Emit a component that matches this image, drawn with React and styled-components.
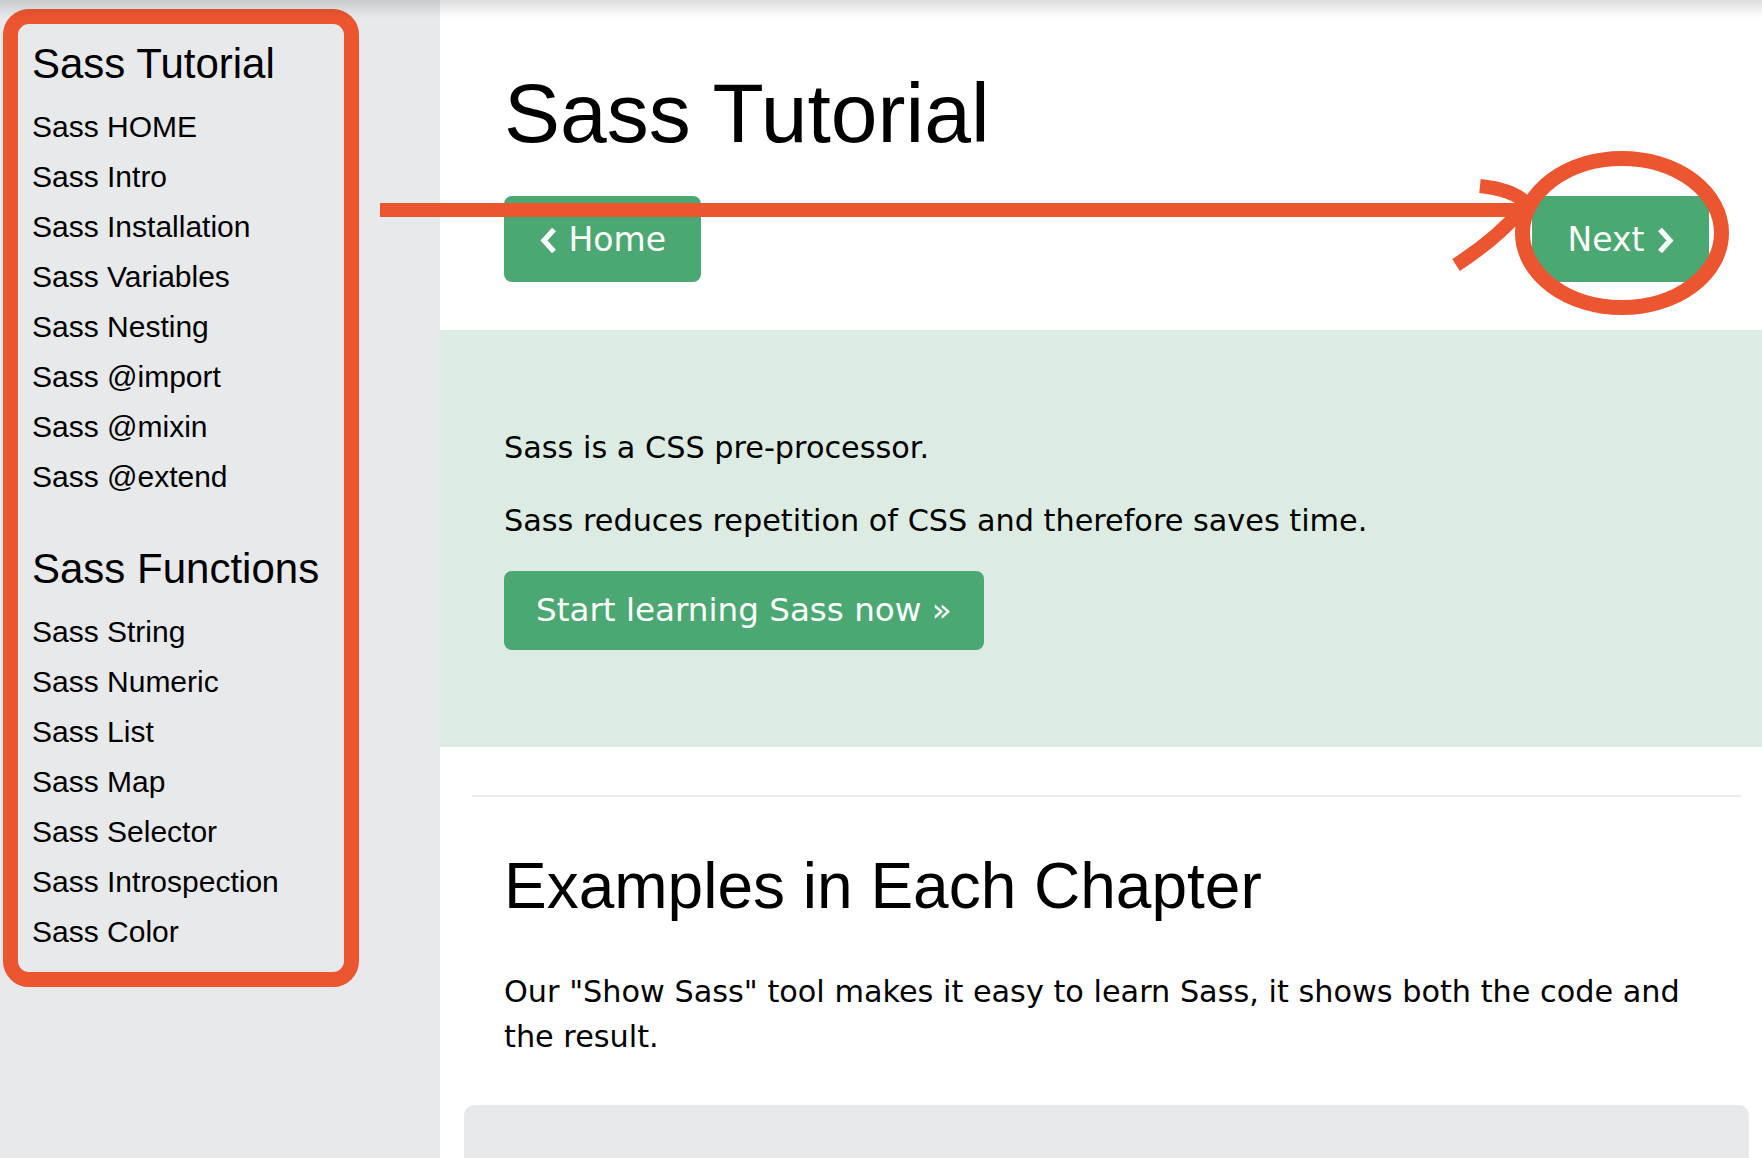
import React from 'react';
import styled, { createGlobalStyle } from 'styled-components';

const GlobalStyle = createGlobalStyle`
  * { box-sizing: border-box; }
  html, body { margin: 0; padding: 0; background: #ffffff; }
  body {
    font-family: "DejaVu Sans", Verdana, sans-serif;
    color: #000;
    overflow: hidden;
  }
`;

const ACCENT = '#eb5530';
const GREEN = '#4ca873';

const Page = styled.div`
  position: relative;
  display: flex;
  width: 1762px;
  height: 1158px;
  overflow: hidden;

  &::before {
    content: "";
    position: absolute;
    top: 0;
    left: 0;
    right: 0;
    height: 18px;
    background: linear-gradient(rgba(0, 0, 0, 0.13), rgba(0, 0, 0, 0));
    pointer-events: none;
    z-index: 2;
  }
`;

const Sidebar = styled.aside`
  flex: 0 0 440px;
  background: #e7e9eb;
  padding: 9px 0 0 3px;
`;

const NavBox = styled.nav`
  width: 356px;
  border: 15px solid ${ACCENT};
  border-radius: 26px;
  padding: 15px 0 15px 14px;
  font-family: "Liberation Sans", Arial, sans-serif;
`;

const NavHeading = styled.h2`
  margin: ${(p) => (p.$spaced ? '42px' : '0')} 0 14px;
  font-size: 42px;
  line-height: 49px;
  font-weight: 400;
  color: #000;
  white-space: nowrap;
`;

const NavLink = styled.a`
  display: block;
  font-size: 30px;
  line-height: 50px;
  color: #000;
  text-decoration: none;
  white-space: nowrap;
`;

const Main = styled.main`
  flex: 1;
  background: #fff;
  display: flex;
  flex-direction: column;
`;

const Intro = styled.header`
  padding: 63px 53px 48px 64px;
`;

const Title = styled.h1`
  margin: 0 0 32px;
  font-family: "Liberation Sans", Arial, sans-serif;
  font-size: 84px;
  line-height: 101px;
  font-weight: 400;
`;

const ButtonRow = styled.div`
  display: flex;
  justify-content: space-between;
  align-items: center;
`;

const Button = styled.a`
  display: inline-flex;
  align-items: center;
  gap: 12px;
  background: ${GREEN};
  color: #fff;
  font-family: "DejaVu Sans", Verdana, sans-serif;
  font-size: ${(p) => (p.$big ? '32.6px' : '33px')};
  line-height: 49.5px;
  padding: ${(p) => (p.$big ? '15px 32px 15px 32px' : '19px 35.5px 17px')};
  border-radius: 8px;
  text-decoration: none;
  white-space: nowrap;
`;

const ChevronIcon = styled.svg`
  width: 17px;
  height: 25px;
  flex: 0 0 auto;
  margin-top: 2px;
`;

const Chevron = ({ dir }) => (
  <ChevronIcon viewBox="0 0 17 25" aria-hidden="true">
    <path
      d={dir === 'left' ? 'M14 1.5 L4 12.5 L14 23.5' : 'M3 1.5 L13 12.5 L3 23.5'}
      fill="none"
      stroke="#fff"
      strokeWidth="5.2"
      strokeLinejoin="miter"
    />
  </ChevronIcon>
);

const Band = styled.section`
  background: #ddece2;
  padding: 95px 53px 97px 64px;
`;

const Para = styled.p`
  margin: 0 0 ${(p) => (p.$last ? '0' : '28px')};
  font-size: 30.3px;
  line-height: 45px;
`;

const Lower = styled.section`
  padding: 48px 13px 0 24px;
  display: flex;
  flex-direction: column;
`;

const Rule = styled.hr`
  margin: 0 8px;
  border: none;
  height: 2px;
  background: #ebeced;
`;

const Text = styled.div`
  padding: 0 40px;
`;

const SectionTitle = styled.h2`
  margin: 50.6px 0 44px;
  font-family: "Liberation Sans", Arial, sans-serif;
  font-size: 64px;
  line-height: 77px;
  font-weight: 400;
`;

const ExampleBox = styled.div`
  margin-top: 46.6px;
  height: 220px;
  background: #e7e9eb;
  border-radius: 10px;
`;

const Overlay = styled.svg`
  position: absolute;
  top: 0;
  left: 0;
  width: 1762px;
  height: 1158px;
  pointer-events: none;
  z-index: 3;
`;

const tutorialLinks = [
  'Sass HOME',
  'Sass Intro',
  'Sass Installation',
  'Sass Variables',
  'Sass Nesting',
  'Sass @import',
  'Sass @mixin',
  'Sass @extend',
];

const functionLinks = [
  'Sass String',
  'Sass Numeric',
  'Sass List',
  'Sass Map',
  'Sass Selector',
  'Sass Introspection',
  'Sass Color',
];

export default function App() {
  return (
    <>
      <GlobalStyle />
      <Page>
        <Sidebar>
          <NavBox>
            <NavHeading>Sass Tutorial</NavHeading>
            {tutorialLinks.map((l) => (
              <NavLink key={l} href="#">{l}</NavLink>
            ))}
            <NavHeading $spaced>Sass Functions</NavHeading>
            {functionLinks.map((l) => (
              <NavLink key={l} href="#">{l}</NavLink>
            ))}
          </NavBox>
        </Sidebar>

        <Main>
          <Intro>
            <Title>Sass Tutorial</Title>
            <ButtonRow>
              <Button href="#"><Chevron dir="left" />Home</Button>
              <Button href="#">Next<Chevron dir="right" /></Button>
            </ButtonRow>
          </Intro>

          <Band>
            <Para>Sass is a CSS pre-processor.</Para>
            <Para>Sass reduces repetition of CSS and therefore saves time.</Para>
            <Button $big href="#">Start learning Sass now »</Button>
          </Band>

          <Lower>
            <Rule />
            <Text>
              <SectionTitle>Examples in Each Chapter</SectionTitle>
              <Para $last>
                Our "Show Sass" tool makes it easy to learn Sass, it shows both the code and the result.
              </Para>
            </Text>
            <ExampleBox />
          </Lower>
        </Main>

        <Overlay viewBox="0 0 1762 1158">
          <line x1="380" y1="210" x2="1522" y2="210" stroke={ACCENT} strokeWidth="14" />
          <path
            d="M1480 186 C1500 188 1517 193 1527 204 C1508 226 1484 247 1456 265"
            fill="none"
            stroke={ACCENT}
            strokeWidth="14"
          />
          <ellipse cx="1622" cy="233" rx="99.5" ry="74.5" fill="none" stroke={ACCENT} strokeWidth="15" />
        </Overlay>
      </Page>
    </>
  );
}
